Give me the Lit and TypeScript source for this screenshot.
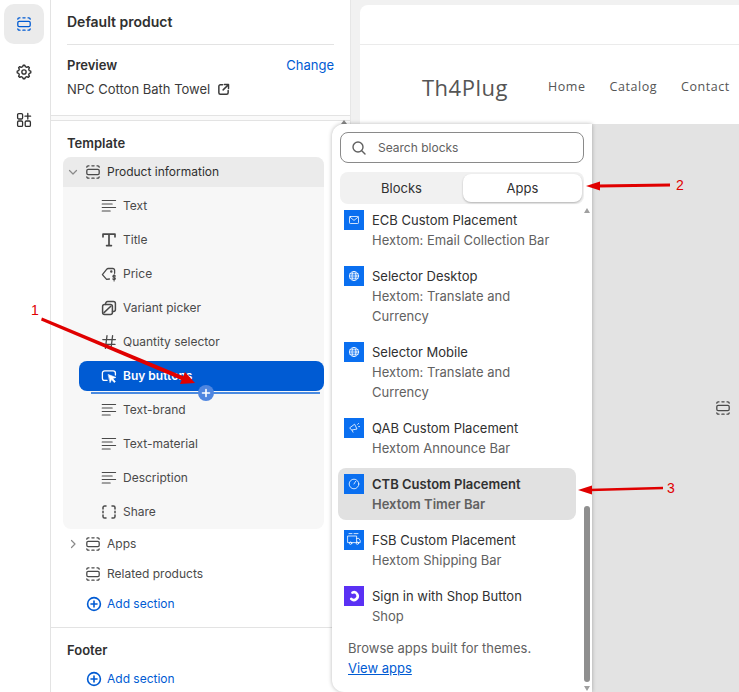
import { LitElement, html, css, svg } from "lit";
import { customElement } from "lit/decorators.js";

const gearPath = () => {
  const pts: string[] = [];
  const teeth = 8;
  for (let i = 0; i < teeth; i++) {
    const a = (i / teeth) * Math.PI * 2;
    const step = Math.PI / teeth;
    const p = [
      [a - step * 0.62, 6.1],
      [a - step * 0.32, 7.6],
      [a + step * 0.32, 7.6],
      [a + step * 0.62, 6.1],
    ];
    for (const [an, r] of p) {
      pts.push(`${(10 + r * Math.sin(an)).toFixed(2)} ${(10 - r * Math.cos(an)).toFixed(2)}`);
    }
  }
  return "M" + pts.join("L") + "Z";
};

const ico = (size: number, box: number, body: unknown) => html`<svg class="ico" width=${size} height=${size} viewBox="0 0 ${box} ${box}" fill="none" stroke="currentColor" stroke-width="1.3" stroke-linecap="round" stroke-linejoin="round">${body}</svg>`;

const sectionBody = svg`<rect x="1.8" y="5.4" width="12.4" height="5.2" rx="1.4"/><path d="M1.8 3.2a1.4 1.4 0 0 1 1.4-1.4h.8M6.9 1.8h2.2M12 1.8h.8a1.4 1.4 0 0 1 1.4 1.4M1.8 12.8a1.4 1.4 0 0 0 1.4 1.4h.8M6.9 14.2h2.2M12 14.2h.8a1.4 1.4 0 0 0 1.4-1.4"/>`;
const section = (s = 16) => ico(s, 16, sectionBody);

const lines = () => ico(16, 16, svg`<path d="M1.2 2.5h13.4M1.2 6h10M1.2 9.5h13.4M1.2 13h8" stroke-width="1.1"/>`);
const icons: Record<string, () => unknown> = {
  text: lines,
  title: () => ico(16, 16, svg`<path d="M2 4.8V2.2h12v2.6M8 2.2v11.4M5.6 13.6h4.8" stroke-width="1.7"/>`),
  price: () => ico(16, 16, svg`<path d="M8.4 13 5.6 13.4 1.4 8.6 5.8 3.2a2 2 0 0 1 1.4-.7h4.6a1.8 1.8 0 0 1 1.8 1.8v3"/><circle cx="10.3" cy="5.4" r=".6"/><path d="M14.4 10.1c-.3-.5-.8-.7-1.3-.7-.8 0-1.3.4-1.3 1s.5.9 1.3 1.1 1.3.5 1.3 1.1-.5 1-1.3 1c-.5 0-1-.2-1.3-.7M13.1 8.6v6.3" stroke-width="1.1"/>`),
  variant: () => ico(16, 16, svg`<rect x="1.6" y="4.6" width="9.8" height="9.8" rx="2" stroke-width="1.5"/><path d="M4.6 4.4V3.6a2 2 0 0 1 2-2h5.8a2 2 0 0 1 2 2v5.8a2 2 0 0 1-2 2h-.9M3 12.6 9.8 6.2" stroke-width="1.5"/>`),
  qty: () => ico(16, 16, svg`<path d="M6 1.6 4.4 14.4M11.6 1.6 10 14.4M1.8 5.6h12.6M1.4 10.4h12.6"/>`),
  buy: () => ico(16, 16, svg`<path d="M6 12.4H3.6a2.2 2.2 0 0 1-2.2-2.2V5a2.2 2.2 0 0 1 2.2-2.2h8.6A2.2 2.2 0 0 1 14.4 5v2"/><path d="M7.4 6.6 15 9.4l-3.2 1.2 2.6 3-1.2 1-2.6-3-1.4 2.8Z" fill="currentColor" stroke-width=".6"/>`),
  share: () => ico(16, 16, svg`<path d="M5 2H3.6A1.6 1.6 0 0 0 2 3.6V5M11 2h1.4A1.6 1.6 0 0 1 14 3.6V5M5 14H3.6A1.6 1.6 0 0 1 2 12.4V11M11 14h1.4a1.6 1.6 0 0 0 1.6-1.6V11M2 7.2v1.6M14 7.2v1.6" stroke-width="1.5"/>`),
};

const plusCircle = () => html`<svg class="ico" width="16" height="16" viewBox="0 0 16 16" fill="none" stroke="currentColor" stroke-width="1.6" stroke-linecap="round"><circle cx="8" cy="8" r="6.4"/><path d="M8 5v6M5 8h6"/></svg>`;
const chevron = (d: string) => html`<svg class="chev" width="10" height="10" viewBox="0 0 10 10" fill="none" stroke="currentColor" stroke-width="1.2" stroke-linecap="round" stroke-linejoin="round"><path d=${d}/></svg>`;

const appGlyphs: Record<string, unknown> = {
  mail: svg`<rect x="5.5" y="6.5" width="9" height="7" rx=".8"/><path d="m5.8 7 4.2 3.4L14.2 7"/>`,
  globe: svg`<circle cx="10" cy="10" r="4.6"/><ellipse cx="10" cy="10" rx="2" ry="4.6"/><path d="M5.4 10h9.2M6 7.8h8M6 12.2h8"/>`,
  horn: svg`<path d="m6 9.6 4.6-3.4 2.4 4.8-5 1Zm2 2.6 1 2"/><path d="M13.6 6.4l1-1M14.6 8.6h1"/>`,
  clock: svg`<circle cx="10" cy="10" r="4.8"/><path d="m10 10 1.6-2.6"/>`,
  truck: svg`<path d="M4 6h8.6v6.6H4ZM12.6 8.4h2.2l1.4 2v2.2h-3.6"/><circle cx="6.6" cy="13.2" r="1.2"/><circle cx="13.4" cy="13.2" r="1.2"/><path d="M5 3.6h3M10 3.6h4"/>`,
};

type App = { t: string; s: string[]; g: string; hover?: boolean };
const apps: App[] = [
  { t: "ECB Custom Placement", s: ["Hextom: Email Collection Bar"], g: "mail" },
  { t: "Selector Desktop", s: ["Hextom: Translate and", "Currency"], g: "globe" },
  { t: "Selector Mobile", s: ["Hextom: Translate and", "Currency"], g: "globe" },
  { t: "QAB Custom Placement", s: ["Hextom Announce Bar"], g: "horn" },
  { t: "CTB Custom Placement", s: ["Hextom Timer Bar"], g: "clock", hover: true },
  { t: "FSB Custom Placement", s: ["Hextom Shipping Bar"], g: "truck" },
  { t: "Sign in with Shop Button", s: ["Shop"], g: "shop" },
];

const blocks = [
  ["Text", "text"], ["Title", "title"], ["Price", "price"], ["Variant picker", "variant"],
  ["Quantity selector", "qty"], ["Buy buttons", "buy"], ["Text-brand", "text"],
  ["Text-material", "text"], ["Description", "text"], ["Share", "share"],
];

@customElement("app-root")
export class AppRoot extends LitElement {
  static styles = css`
    :host { display: block; position: relative; width: 739px; height: 692px; overflow: hidden; background: #f1f1f1; font: 400 13px/20px Inter, "Liberation Sans", sans-serif; color: #303030; }
    * { box-sizing: border-box; }
    .ico { display: block; flex: none; }
    .chev { display: block; flex: none; color: #8a8a8a; }
    .app { display: flex; height: 692px; }
    .rail { width: 51px; flex: none; background: #fff; border-right: 1px solid #e3e3e3; padding: 4px; display: flex; flex-direction: column; gap: 8px; }
    .rail div { width: 40px; height: 40px; border-radius: 10px; display: flex; align-items: center; justify-content: center; color: #303030; }
    .rail .on { background: #ebebeb; color: #005bd3; }
    .panel { width: 300px; flex: none; background: #fff; border-right: 1px solid #e6e6e6; overflow: hidden; display: flex; flex-direction: column; }
    .panel > * { flex: none; }
    .head { margin: 0 16px; height: 45px; border-bottom: 1px solid #e3e3e3; display: flex; align-items: center; font-weight: 600; font-size: 14px; padding-bottom: 1px; }
    .prev { padding: 10px 16px 16px; display: flex; flex-direction: column; gap: 4px; }
    .row { display: flex; justify-content: space-between; }
    .b { font-weight: 600; }
    .link { color: #005bd3; }
    .name { display: flex; align-items: center; gap: 7px; color: #3a3a3a; }
    .band { height: 6px; background: #fafafa; border-top: 1px solid #e3e3e3; border-bottom: 1px solid #e3e3e3; }
    .sec { padding: 11px 26px 8px 12px; }
    .sec h3 { margin: 0 0 3px; padding-left: 4px; font: 600 13px/22px Inter, "Liberation Sans", sans-serif; }
    .tree { background: #f7f7f7; border-radius: 8px; font-size: 12px; }
    .pi { height: 30px; background: #ebebeb; border-radius: 8px 8px 0 0; display: flex; align-items: center; }
    .pi .chev { margin: 0 7px 0 5px; }
    .pi span, .sr span { margin-left: 6px; }
    .pi .ico, .sr .ico { color: #4a4a4a; }
    .kids { padding: 4px 0 2px 16px; display: flex; flex-direction: column; gap: 4px; }
    .kid { height: 30px; border-radius: 8px; padding-left: 22px; display: flex; align-items: center; gap: 6px; color: #4a4a4a; }
    .kid.sel { background: #005bd3; color: #fff; font-weight: 600; }
    .sr { height: 30px; display: flex; align-items: center; padding-left: 22px; color: #4a4a4a; font-size: 12px; }
    .sr.c { padding-left: 5px; }
    .sr.c .chev { margin: 0 7px 0 0; }
    .sr.add { color: #005bd3; padding-left: 23px; }
    .sr.add .ico { color: #005bd3; }
    .sr.add span { margin-left: 5px; }
    .div { height: 1px; background: #e3e3e3; }
    .main { flex: 1; min-width: 0; padding: 5px 0 0 9px; display: flex; }
    .frame { flex: 1; background: #fff; border-radius: 8px 0 0 0; display: flex; flex-direction: column; overflow: hidden; }
    .top { height: 40px; flex: none; border-bottom: 1px solid #ebebeb; }
    .nav { height: 79px; flex: none; display: flex; align-items: center; padding-left: 62px; font-family: "Open Sans", sans-serif; color: #555; }
    .logo { font-size: 22px; letter-spacing: .5px; width: 126px; flex: none; padding-top: 4px; }
    .nav a { font-size: 12.5px; letter-spacing: .55px; margin-right: 24px; flex: none; white-space: nowrap; padding-top: 5px; }
    .canvas { flex: 1; background: #e3e3e3; display: flex; justify-content: flex-end; padding: 276px 8px 0 0; color: #4a4a4a; }
    .pop { position: absolute; left: 332px; top: 124px; width: 260px; height: 568px; background: #fff; border-radius: 12px 0 0 12px; box-shadow: 0 0 4px rgba(0,0,0,.28); padding: 8px 8px 0; }
    .search { height: 31px; border: 1px solid #8a8a8a; border-radius: 8px; display: flex; align-items: center; padding-left: 10px; gap: 11px; color: #616161; font-size: 12px; }
    .tabs { margin-top: 9px; height: 32px; background: #f1f1f1; border-radius: 8px; display: grid; grid-template-columns: 123px 119px; padding: 2px 0; text-align: center; line-height: 28px; }
    .tabs .on { background: #fff; border-radius: 8px; box-shadow: 0 1px 2px rgba(0,0,0,.25); }
    .list { margin-left: -2px; width: 238px; display: flex; flex-direction: column; gap: 4px; }
    .item { padding: 6px 12px 6px 6px; display: flex; gap: 8px; border-radius: 8px; }
    .item.hover { background: #e1e1e1; font-weight: 600; }
    .item .sub { color: #616161; }
    .tile { width: 20px; height: 20px; flex: none; display: block; }
    .foot { padding: 6px 0 0 8px; color: #616161; }
    .foot a { display: block; color: #005bd3; text-decoration: underline; }
    .bar { position: absolute; left: 252px; top: 84px; width: 6px; height: 484px; }
    .thumb { position: absolute; top: 298px; left: 0; width: 6px; height: 176px; background: #8f8f8f; border-radius: 3px; }
    .arr { position: absolute; left: 0; border-left: 3px solid transparent; border-right: 3px solid transparent; }
    .arr.u { top: 0; border-bottom: 5px solid #a0a0a0; }
    .arr.d { bottom: 1px; border-top: 5px solid #a0a0a0; }
    .up { position: absolute; left: 341px; top: 120px; border-left: 3px solid transparent; border-right: 3px solid transparent; border-bottom: 4px solid #8a8a8a; }
    .drop { position: absolute; left: 91px; top: 392px; width: 229px; height: 2px; background: #4a8ae0; }
    .drop i { position: absolute; left: 107px; top: -7px; width: 16px; height: 16px; border-radius: 50%; background: #4f86e0; color: #fff; display: flex; align-items: center; justify-content: center; }
    .marks { position: absolute; inset: 0; pointer-events: none; }
    .marks text { font: 14px "Liberation Sans", sans-serif; fill: #e00000; }
  `;

  private tile(g: string) {
    if (g === "shop") {
      return html`<svg class="tile" viewBox="0 0 20 20"><rect width="20" height="20" fill="#5a31f4"/><path d="M8.4 6.6A3.8 3.8 0 1 1 7.2 12.8" fill="none" stroke="#fff" stroke-width="2.6" stroke-linecap="round"/></svg>`;
    }
    return html`<svg class="tile" viewBox="0 0 20 20" fill="none" stroke="#fff" stroke-width=".8" stroke-linejoin="round" stroke-linecap="round"><rect width="20" height="20" fill="#0a6ff0" stroke="none"/>${appGlyphs[g]}</svg>`;
  }

  render() {
    return html`
      <div class="app">
        <nav class="rail">
          <div class="on">${section(16)}</div>
          <div>${html`<svg class="ico" width="18" height="18" viewBox="0 0 20 20" fill="none" stroke="currentColor" stroke-width="1.5" stroke-linejoin="round"><path d=${gearPath()}/><circle cx="10" cy="10" r="2.4"/></svg>`}</div>
          <div>${ico(16, 16, svg`<rect x="1.6" y="1.6" width="5" height="5.4" rx="1.2"/><rect x="1.6" y="9" width="5" height="5.4" rx="1.2"/><rect x="9.2" y="9" width="5.2" height="5.4" rx="1.2"/><path d="M11.8 1.4v5.6M9 4.2h5.6"/>`)}</div>
        </nav>
        <aside class="panel">
          <div class="head">Default product</div>
          <div class="prev">
            <div class="row"><span class="b">Preview</span><span class="link">Change</span></div>
            <div class="name">NPC Cotton Bath Towel ${ico(13, 14, svg`<path d="M6 2H3.6A1.6 1.6 0 0 0 2 3.6v6.8A1.6 1.6 0 0 0 3.6 12h6.8a1.6 1.6 0 0 0 1.6-1.6V8M8 1.6h4.4V6M12.2 1.8 6.6 7.4" stroke-width="1.6"/>`)}</div>
          </div>
          <div class="band"></div>
          <section class="sec">
            <h3>Template</h3>
            <div class="tree">
              <div class="pi">${chevron("M1.5 3.5 5 7l3.5-3.5")}${section()}<span>Product information</span></div>
              <div class="kids">
                ${blocks.map(([n, k]) => html`<div class="kid ${k === "buy" ? "sel" : ""}">${icons[k]()}<span>${n}</span></div>`)}
              </div>
            </div>
            <div class="sr c">${chevron("M3.5 1.5 7 5 3.5 8.5")}${section()}<span>Apps</span></div>
            <div class="sr">${section()}<span>Related products</span></div>
            <div class="sr add">${plusCircle()}<span>Add section</span></div>
          </section>
          <div class="div"></div>
          <section class="sec">
            <h3>Footer</h3>
            <div class="sr add">${plusCircle()}<span>Add section</span></div>
          </section>
        </aside>
        <main class="main">
          <div class="frame">
            <div class="top"></div>
            <div class="nav"><span class="logo">Th4Plug</span><a>Home</a><a>Catalog</a><a>Contact</a></div>
            <div class="canvas">${section()}</div>
          </div>
        </main>
      </div>
      <div class="up"></div>
      <div class="drop"><i><svg width="10" height="10" viewBox="0 0 10 10" stroke="currentColor" stroke-width="1.6" stroke-linecap="round"><path d="M5 1.5v7M1.5 5h7"/></svg></i></div>
      <div class="pop">
        <div class="search">${html`<svg class="ico" width="16" height="16" viewBox="0 0 16 16" fill="none" stroke="currentColor" stroke-width="1.4" stroke-linecap="round"><circle cx="7" cy="7" r="5"/><path d="m11 11 3 3"/></svg>`}<span>Search blocks</span></div>
        <div class="tabs"><div>Blocks</div><div class="on">Apps</div></div>
        <div class="list">
          ${apps.map((a) => html`<div class="item ${a.hover ? "hover" : ""}">${this.tile(a.g)}<div><div>${a.t}</div>${a.s.map((l) => html`<div class="sub">${l}</div>`)}</div></div>`)}
        </div>
        <div class="foot">Browse apps built for themes.<a>View apps</a></div>
        <div class="bar"><div class="arr u"></div><div class="thumb"></div><div class="arr d"></div></div>
      </div>
      <svg class="marks" width="739" height="692" viewBox="0 0 739 692">
        <g fill="#e00000" stroke="none">
          <path d="M42 317.5 L184 376.5 L182.6 380.5 L41 320.5Z"/>
          <path d="M195 383 L180 384 L185 372Z"/>
          <path d="M598 184.6 L670 183.6 L670 186.4 L598 187.4Z"/>
          <path d="M586 186 L600 181.5 L600 190.5Z"/>
          <path d="M590 488.8 L663 486.8 L663 489.2 L590 491.2Z"/>
          <path d="M578 490 L592 485.5 L592 494.5Z"/>
        </g>
        <text x="31" y="315">1</text>
        <text x="676" y="190">2</text>
        <text x="667" y="493">3</text>
      </svg>
    `;
  }
}
